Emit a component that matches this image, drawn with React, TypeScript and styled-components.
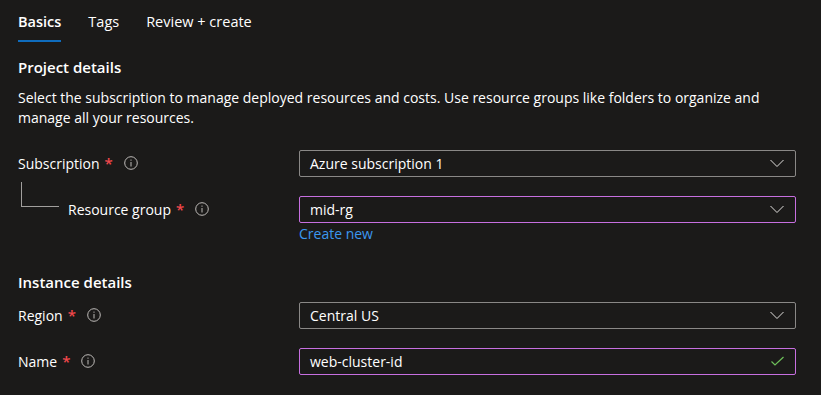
import styled, { createGlobalStyle } from 'styled-components'

const GlobalStyle = createGlobalStyle`
  body {
    margin: 0;
    background: #1b1a19;
    color: #ffffff;
    font-family: 'Open Sans', 'Noto Sans', sans-serif;
    font-size: 14px;
  }
`

const Page = styled.div`
  width: 821px;
  height: 395px;
  padding: 0 25px 0 18px;
  box-sizing: border-box;
  overflow: hidden;
`

const Tabs = styled.nav`
  display: flex;
  gap: 27px;
`

const Tab = styled.div<{ $active?: boolean }>`
  padding: 12px 0 8px;
  line-height: 20px;
  font-size: 14.5px;
  font-weight: ${(p) => (p.$active ? 600 : 400)};
  border-bottom: 2px solid ${(p) => (p.$active ? '#0f6cbd' : 'transparent')};
`

const SectionTitle = styled.h2<{ $top: number }>`
  margin: ${(p) => p.$top}px 0 0;
  font-size: 15px;
  font-weight: 600;
  line-height: 20px;
`

const Description = styled.p`
  margin: 11px 0 0;
  line-height: 20px;
  max-width: 760px;
`

const Form = styled.div<{ $top: number }>`
  margin-top: ${(p) => p.$top}px;
  display: flex;
  flex-direction: column;
  gap: 19px;
`

const Row = styled.div`
  display: grid;
  grid-template-columns: 281px 497px;
  align-items: start;
`

const Label = styled.div<{ $indent?: boolean }>`
  position: relative;
  height: 26px;
  display: flex;
  align-items: center;
  padding-left: ${(p) => (p.$indent ? 50 : 0)}px;
`

const TreeLine = styled.span`
  position: absolute;
  left: 3px;
  top: -14px;
  width: 37px;
  height: 24px;
  border-left: 1px solid #a19f9d;
  border-bottom: 1px solid #a19f9d;
`

const Required = styled.span`
  color: #f1484c;
  margin-left: 5px;
  font-weight: 600;
  font-size: 15px;
`

const Info = styled.span`
  display: inline-flex;
  margin-left: 11px;
`

const Field = styled.div`
  display: flex;
  flex-direction: column;
`

const Box = styled.div<{ $accent?: boolean }>`
  height: 27px;
  box-sizing: border-box;
  display: flex;
  align-items: center;
  justify-content: space-between;
  padding: 0 10px;
  border: 1px solid ${(p) => (p.$accent ? '#c76fe0' : '#8a8886')};
  border-radius: 2px;
`

const Link = styled.a`
  color: #3b97ef;
  line-height: 20px;
  margin-top: 1px;
  text-decoration: none;
  cursor: pointer;
`

const InfoIcon = () => (
  <svg width="14" height="14" viewBox="0 0 14 14" fill="none">
    <circle cx="7" cy="7" r="6.3" stroke="#bebbb8" strokeWidth="1" />
    <line x1="7" y1="6" x2="7" y2="10.5" stroke="#bebbb8" strokeWidth="1" />
    <circle cx="7" cy="4.1" r="0.7" fill="#bebbb8" />
  </svg>
)

const Chevron = () => (
  <svg width="16" height="9" viewBox="0 0 16 9" fill="none">
    <polyline points="1.5,1 8,7.5 14.5,1" stroke="#e1dfdd" strokeWidth="1" />
  </svg>
)

const Check = () => (
  <svg width="15" height="11" viewBox="0 0 15 11" fill="none">
    <polyline points="1.5,5.5 5,9 13.5,1" stroke="#6ec05a" strokeWidth="1.2" />
  </svg>
)

function FieldLabel({ text, indent }: { text: string; indent?: boolean }) {
  return (
    <Label $indent={indent}>
      {indent && <TreeLine />}
      {text}
      <Required>*</Required>
      <Info>
        <InfoIcon />
      </Info>
    </Label>
  )
}

export default function App() {
  return (
    <>
      <GlobalStyle />
      <Page>
        <Tabs>
          <Tab $active>Basics</Tab>
          <Tab>Tags</Tab>
          <Tab>Review + create</Tab>
        </Tabs>

        <SectionTitle $top={15}>Project details</SectionTitle>
        <Description>
          Select the subscription to manage deployed resources and costs. Use resource groups like
          folders to organize and manage all your resources.
        </Description>

        <Form $top={22}>
          <Row>
            <FieldLabel text="Subscription" />
            <Box>
              Azure subscription 1
              <Chevron />
            </Box>
          </Row>
          <Row>
            <FieldLabel text="Resource group" indent />
            <Field>
              <Box $accent>
                mid-rg
                <Chevron />
              </Box>
              <Link>Create new</Link>
            </Field>
          </Row>
        </Form>

        <SectionTitle $top={28}>Instance details</SectionTitle>

        <Form $top={10}>
          <Row>
            <FieldLabel text="Region" />
            <Box>
              Central US
              <Chevron />
            </Box>
          </Row>
          <Row>
            <FieldLabel text="Name" />
            <Box $accent>
              web-cluster-id
              <Check />
            </Box>
          </Row>
        </Form>
      </Page>
    </>
  )
}
